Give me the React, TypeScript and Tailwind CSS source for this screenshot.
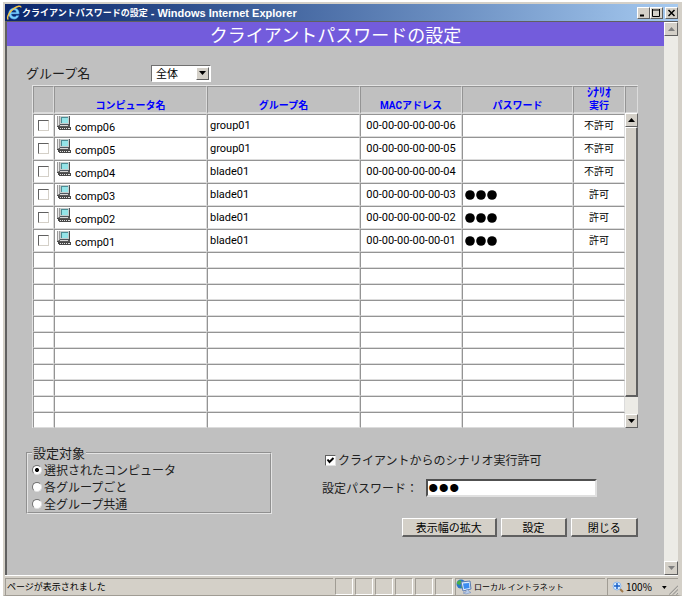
import type { ReactNode } from "react";

type Computer = {
  name: string;
  group: string;
  mac: string;
  password: boolean;
  allowed: boolean;
};

const computers: Computer[] = [
  { name: "comp06", group: "group01", mac: "00-00-00-00-00-06", password: false, allowed: false },
  { name: "comp05", group: "group01", mac: "00-00-00-00-00-05", password: false, allowed: false },
  { name: "comp04", group: "blade01", mac: "00-00-00-00-00-04", password: false, allowed: false },
  { name: "comp03", group: "blade01", mac: "00-00-00-00-00-03", password: true, allowed: true },
  { name: "comp02", group: "blade01", mac: "00-00-00-00-00-02", password: true, allowed: true },
  { name: "comp01", group: "blade01", mac: "00-00-00-00-00-01", password: true, allowed: true },
];

const emptyRows = Array.from({ length: 11 }, (_, i) => i);

const raised =
  "border border-t-white border-l-white border-r-[#606060] border-b-[#606060] bg-[#d4d0c8]";
const cell = "border border-t-[#949494] border-l-[#949494] border-r-[#dcdcdc] border-b-[#dcdcdc] p-0";

const Arrow = ({ up, muted }: { up?: boolean; muted?: boolean }) => (
  <svg viewBox="0 0 7 4" className={muted ? "w-[7px] h-1 text-[#808080]" : "w-[7px] h-1 text-black"}>
    <path d={up ? "M0 4L3.5 0L7 4Z" : "M0 0L3.5 4L7 0Z"} fill="currentColor" />
  </svg>
);

const IeLogo = () => (
  <svg viewBox="0 0 16 16" className="w-4 h-4 shrink-0">
    <path d="M13.200 9H5.400c.3 2 1.400 2.700 2.900 2.700 1 0 1.700-.4 2.200-1.200h2.400c-.7 2.400-2.500 3.700-4.800 3.700C4.700 14.200 2.600 12 2.600 8.600c0-3.400 2.200-5.700 5.400-5.700 3.500 0 5.500 2.500 5.200 6.100ZM5.500 7.300h4.700C10 5.700 9.200 5 7.900 5 6.600 5 5.800 5.800 5.500 7.300Z" fill="#7cd0fa" stroke="#2c78c8" strokeWidth=".5" />
    <path d="M2.300 14.500C.2 12.500 3.500 6.600 8 3.400c3.500-2.500 6.800-3 7-.9" fill="none" stroke="#f3c64a" strokeWidth="1.400" />
  </svg>
);

const ComputerIcon = () => (
  <svg viewBox="0 0 14 14" className="w-3.5 h-3.5 shrink-0" shapeRendering="crispEdges">
    <path d="M0 0h3v10H0z" fill="#9a9a9a" />
    <path d="M1 0h1v9H1z" fill="#e8e8e8" />
    <path d="M3 0h10v9H3z" fill="#505860" />
    <path d="M3 0h9v8H3z" fill="#c4cccc" />
    <path d="M4 1h7v6H4z" fill="#4c8c94" />
    <path d="M5 2h6v5H5z" fill="#94e4e8" />
    <path d="M12 2h1v9h-1z" fill="#444" />
    <path d="M2 9h11v2H1z" fill="#585858" />
    <path d="M3 9h8v1H3z" fill="#d8d8d8" />
    <path d="M0 10h2v1H0zM1 11h13v3H2v-1H1z" fill="#484848" />
    <path d="M3 12h1v1H3zM5 12h1v1H5zM7 12h1v1H7zM9 12h1v1H9zM11 12h2v1h-2z" fill="#e0e0e0" />
  </svg>
);

const NetworkIcon = () => (
  <svg viewBox="0 0 16 16" className="w-4 h-4 shrink-0">
    <circle cx="5" cy="5" r="4.500" fill="#2878c8" />
    <path d="M1 3l3-2 2 2-2 3-3-1zM5 7l3-1v3H5z" fill="#48b048" />
    <path d="M5 3l9-1 1 8-8 2z" fill="#dcecff" stroke="#5c7cb0" />
    <path d="M7 4.500l6-.5.500 5-5.500 1z" fill="#3c8cf0" />
    <path d="M10 11l2-.5 1 2 2 1-5 1.500-3-1 3-1z" fill="#b8ccec" stroke="#6c88b8" strokeWidth=".5" />
  </svg>
);

const ZoomIcon = () => (
  <svg viewBox="0 0 12 12" className="w-3 h-3 shrink-0">
    <path d="M7.500 7.500l3.500 3.500" stroke="#a07848" strokeWidth="2" />
    <circle cx="5" cy="5" r="4" fill="#d8ecff" stroke="#8cb8ec" />
    <path d="M5 2v6M2 5h6" stroke="#1860c8" strokeWidth="1.500" />
  </svg>
);

const Dots = () => (
  <svg viewBox="0 0 32 10" className="w-8 h-2.5" role="img" aria-label="パスワード設定済み">
    <circle cx="5" cy="5" r="4.800" />
    <circle cx="16" cy="5" r="4.800" />
    <circle cx="27" cy="5" r="4.800" />
  </svg>
);

const WindowButton = ({ label, children }: { label: string; children: ReactNode }) => (
  <button aria-label={label} className={`${raised} w-[13px] h-3 flex items-center justify-center`}>
    <svg viewBox="0 0 9 8" className="w-[9px] h-2" fill="none" stroke="black">
      {children}
    </svg>
  </button>
);

const TitleBar = () => (
  <header className="flex items-center h-[17px] pl-px text-white font-bold bg-linear-to-r from-[#0a246a] to-[#a6caf0]">
    <IeLogo />
    <span className="text-[9px] leading-4 whitespace-nowrap">クライアントパスワードの設定</span>
    <span className="text-[11px] leading-4 whitespace-pre font-['Liberation_Sans',sans-serif]"> - Windows Internet Explorer</span>
    <div className="ml-auto flex">
      <WindowButton label="最小化"><path d="M1 6.500h4" strokeWidth="2" /></WindowButton>
      <WindowButton label="最大化"><path d="M.5 1h7M.5 0v7.500h7V0" /></WindowButton>
      <div className="w-0.5" />
      <WindowButton label="閉じる"><path d="M1.500 1l6 6M7.500 1l-6 6" strokeWidth="1.500" /></WindowButton>
    </div>
  </header>
);

const Heading = ({ children }: { children?: ReactNode }) => (
  <th className={`${cell} border-b-2 h-[27px] align-bottom text-[10px] leading-3 font-bold text-[#0000ff]`}>
    {children}
  </th>
);

const ComputerTable = () => (
  <div className="flex border-l border-t border-[#e4e4e4]">
    <div className="flex-1 h-[342px] overflow-hidden">
      <table className="w-full table-fixed border-separate border-spacing-0 font-['Roboto','Noto_Sans_CJK_JP',sans-serif] text-[11px] leading-4">
        <colgroup>
          <col className="w-[21px]" />
          <col />
          <col />
          <col className="w-[102px]" />
          <col className="w-[111px]" />
          <col className="w-[52px]" />
        </colgroup>
        <thead>
          <tr>
            <Heading />
            <Heading>コンピュータ名</Heading>
            <Heading>グループ名</Heading>
            <Heading>MACアドレス</Heading>
            <Heading>パスワード</Heading>
            <Heading><span className="text-[12px]">ｼﾅﾘｵ</span><br />実行</Heading>
          </tr>
        </thead>
        <tbody className="bg-white text-black">
          {computers.map((c) => (
            <tr key={c.name} className="h-[23px]">
              <td className={cell}>
                <input type="checkbox" aria-label={c.name} className="appearance-none block mx-auto w-[11px] h-[11px] bg-white border border-t-[#606060] border-l-[#606060] border-r-[#d4d0c8] border-b-[#d4d0c8]" />
              </td>
              <td className={cell}>
                <div className="flex items-start gap-1 pl-0.5">
                  <ComputerIcon />
                  <span className="pt-1">{c.name}</span>
                </div>
              </td>
              <td className={`${cell} pl-0.5`}>{c.group}</td>
              <td className={`${cell} text-center`}>{c.mac}</td>
              <td className={`${cell} pl-0.5`}>
                {c.password && <Dots />}
              </td>
              <td className={`${cell} text-center text-[10px]`}>{c.allowed ? "許可" : "不許可"}</td>
            </tr>
          ))}
          {emptyRows.map((i) => (
            <tr key={i} className="h-4">
              <td className={cell} />
              <td className={cell} />
              <td className={cell} />
              <td className={cell} />
              <td className={cell} />
              <td className={cell} />
            </tr>
          ))}
        </tbody>
      </table>
    </div>
    <div className="w-[13px] flex flex-col">
      <div className={`${cell} h-[27px]`} />
      <button aria-label="上へ" className={`${raised} h-3.5 flex items-center justify-center`}><Arrow up /></button>
      <div className={`${raised} h-[270px] border-r-2 border-b-2`} />
      <div className="flex-1 bg-[#ecebe6]" />
      <button aria-label="下へ" className={`${raised} h-3.5 flex items-center justify-center`}><Arrow /></button>
    </div>
  </div>
);

const Radio = ({ label, checked }: { label: string; checked?: boolean }) => (
  <label className="flex items-center gap-0.5 h-[17px]">
    <input type="radio" name="target" defaultChecked={checked} className="appearance-none w-2.5 h-2.5 rounded-full bg-white border border-t-[#707070] border-l-[#707070] border-r-[#e0e0e0] border-b-[#e0e0e0] checked:bg-radial checked:from-black checked:from-30% checked:to-white checked:to-40%" />
    {label}
  </label>
);

const PushButton = ({ wide, children }: { wide?: boolean; children: ReactNode }) => (
  <button className={`${raised} border-r-2 border-b-2 h-[19px] text-[11px] leading-4 text-black ${wide ? "w-[98px]" : "w-[69px]"}`}>
    {children}
  </button>
);

const StatusBar = () => (
  <footer className="flex h-5 pt-0.5 gap-0.5 bg-[#d4d0c8] text-[8px] leading-4 text-black border-t border-white">
    <div className="flex-1 border-l border-t border-[#a09c94] pl-px text-[9px]">ページが表示されました</div>
    {[0, 1, 2, 3, 4, 5].map((i) => (
      <div key={i} className="w-[18px] border border-[#a09c94] border-r-white border-b-white" />
    ))}
    <div className="w-[150px] flex items-center gap-0.5 border-l border-t border-[#a09c94]">
      <NetworkIcon />
      ローカル イントラネット
    </div>
    <div className="w-[71px] flex items-center gap-0.5 pl-1 border-l border-t border-[#a09c94] text-[10px]">
      <ZoomIcon />
      100%
      <svg viewBox="0 0 5 3" className="w-[5px] h-[3px] ml-2"><path d="M0 0h5L2.500 3z" /></svg>
      <svg viewBox="0 0 10 10" className="w-2.5 h-2.5 ml-auto self-end" stroke="#808080"><path d="M0 10L10 0M4 10l6-6M8 10l2-2" /></svg>
    </div>
  </footer>
);

export default function App() {
  return (
    <div className="p-[3px] pt-0.5 bg-white font-['Noto_Sans_CJK_JP',sans-serif] text-[#202020]">
      <div className="border-2 border-r-4 border-b border-[#d4d0c8] border-b-[#a09c94] bg-[#d4d0c8]">
        <TitleBar />
        <div className="flex h-[554px] border-l-2 border-t border-[#606060]">
          <main className="flex-1 bg-[#c0c0c0]">
            <h1 className="h-6 text-center text-lg leading-6 text-white bg-[#735cdc]">クライアントパスワードの設定</h1>
            <div className="pl-[19px] pr-[26px] pt-[18px]">
              <div className="flex items-center h-[18px]">
                <label htmlFor="group" className="w-[125px] text-[13px]">グループ名</label>
                <div className="relative">
                  <select id="group" className="appearance-none block w-[60px] h-[17px] pl-1 text-[11px] leading-3 bg-white text-black border border-t-[#707070] border-l-[#707070] border-r-white border-b-white">
                    <option>全体</option>
                  </select>
                  <span className={`${raised} absolute right-0.5 top-0.5 w-[13px] h-[13px] flex items-center justify-center pointer-events-none`}><Arrow /></span>
                </div>
              </div>
              <div className="pt-[3px] pl-1.5"><ComputerTable /></div>
              <div className="flex pt-[17px] justify-between">
                <fieldset className="w-[246px] h-[69px] border-2 [border-style:groove] border-[#e4e4e4] pl-1 text-[12px] leading-4">
                  <legend className="px-px text-[13px]">設定対象</legend>
                  <Radio label="選択されたコンピュータ" checked />
                  <Radio label="各グループごと" />
                  <Radio label="全グループ共通" />
                </fieldset>
                <div className="w-[316px] text-[12px] leading-5">
                  <label className="flex items-center gap-0.5 pl-[3px] pt-[5px]">
                    <span className="relative flex">
                      <input type="checkbox" defaultChecked className="peer appearance-none w-[11px] h-[11px] bg-white border border-t-[#606060] border-l-[#606060] border-r-[#e0e0e0] border-b-[#e0e0e0]" />
                      <svg viewBox="0 0 11 11" className="absolute inset-0 hidden peer-checked:block pointer-events-none" fill="none" stroke="black" strokeWidth="2"><path d="M2.500 4.500l2 2.500L8.500 3" /></svg>
                    </span>
                    クライアントからのシナリオ実行許可
                  </label>
                  <div className="flex items-center pt-2">
                    <label htmlFor="password" className="w-[104px]">設定パスワード：</label>
                    <input id="password" type="password" defaultValue="abc" className="w-[171px] h-[18px] px-0 bg-white text-black text-[30px] leading-3 font-['Liberation_Sans',sans-serif] border-2 border-t-[#505050] border-l-[#505050] border-r-[#e0e0e0] border-b-[#e0e0e0]" />
                  </div>
                  <div className="flex gap-1 pt-5 pl-20">
                    <PushButton wide>表示幅の拡大</PushButton>
                    <PushButton>設定</PushButton>
                    <PushButton>閉じる</PushButton>
                  </div>
                </div>
              </div>
            </div>
          </main>
          <div className="w-3.5 flex flex-col justify-between bg-[#ecebe6]">
            <button aria-label="上へスクロール" className={`${raised} h-3.5 flex items-center justify-center`}><Arrow up muted /></button>
            <button aria-label="下へスクロール" className={`${raised} h-3.5 flex items-center justify-center`}><Arrow muted /></button>
          </div>
        </div>
        <StatusBar />
      </div>
    </div>
  );
}
